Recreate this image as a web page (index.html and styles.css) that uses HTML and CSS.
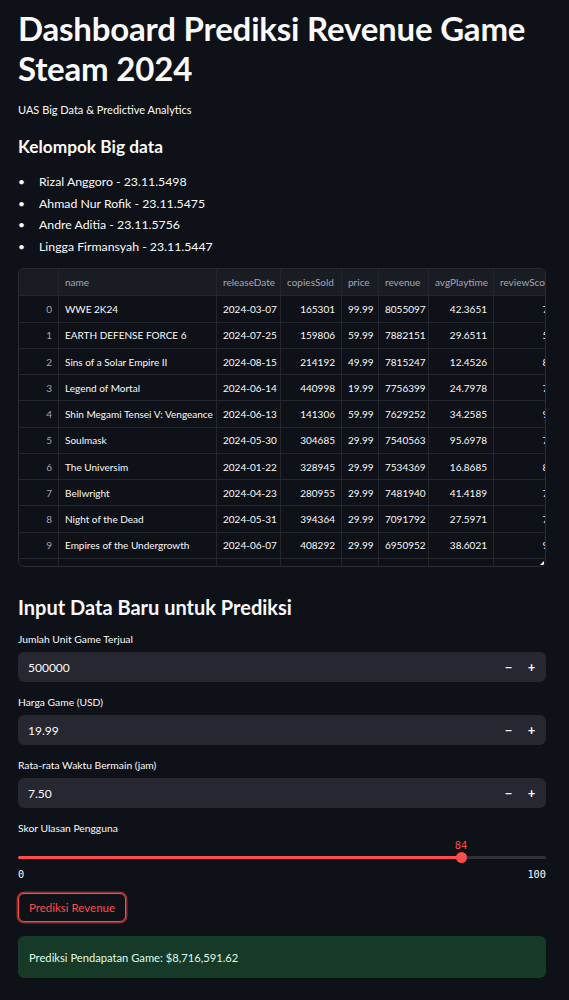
FILE: index.html
```html
<!DOCTYPE html>
<html lang="id">
<head>
<meta charset="utf-8">
<title>Dashboard Prediksi Revenue Game Steam 2024</title>
<link rel="stylesheet" href="styles.css">
</head>
<body>
<main class="main">
  <h1 class="title">Dashboard Prediksi Revenue Game Steam 2024</h1>
  <p class="subtitle">UAS Big Data &amp; Predictive Analytics</p>
  <h3 class="h3">Kelompok Big data</h3>
  <ul class="members">
    <li>Rizal Anggoro - 23.11.5498</li>
    <li>Ahmad Nur Rofik - 23.11.5475</li>
    <li>Andre Aditia - 23.11.5756</li>
    <li>Lingga Firmansyah - 23.11.5447</li>
  </ul>

  <div class="grid-wrap">
    <table class="grid">
      <colgroup>
        <col class="c-idx"><col class="c-name"><col class="c-date"><col class="c-sold"><col class="c-price"><col class="c-rev"><col class="c-play"><col class="c-score">
      </colgroup>
      <thead>
        <tr><th></th><th>name</th><th>releaseDate</th><th>copiesSold</th><th>price</th><th>revenue</th><th>avgPlaytime</th><th>reviewScore</th></tr>
      </thead>
      <tbody>
        <tr><td class="idx">0</td><td>WWE 2K24</td><td>2024-03-07</td><td class="num">165301</td><td class="num">99.99</td><td class="num">8055097</td><td class="num">42.3651</td><td class="num">73</td></tr>
        <tr><td class="idx">1</td><td>EARTH DEFENSE FORCE 6</td><td>2024-07-25</td><td class="num">159806</td><td class="num">59.99</td><td class="num">7882151</td><td class="num">29.6511</td><td class="num">58</td></tr>
        <tr><td class="idx">2</td><td>Sins of a Solar Empire II</td><td>2024-08-15</td><td class="num">214192</td><td class="num">49.99</td><td class="num">7815247</td><td class="num">12.4526</td><td class="num">86</td></tr>
        <tr><td class="idx">3</td><td>Legend of Mortal</td><td>2024-06-14</td><td class="num">440998</td><td class="num">19.99</td><td class="num">7756399</td><td class="num">24.7978</td><td class="num">77</td></tr>
        <tr><td class="idx">4</td><td>Shin Megami Tensei V: Vengeance</td><td>2024-06-13</td><td class="num">141306</td><td class="num">59.99</td><td class="num">7629252</td><td class="num">34.2585</td><td class="num">95</td></tr>
        <tr><td class="idx">5</td><td>Soulmask</td><td>2024-05-30</td><td class="num">304685</td><td class="num">29.99</td><td class="num">7540563</td><td class="num">95.6978</td><td class="num">79</td></tr>
        <tr><td class="idx">6</td><td>The Universim</td><td>2024-01-22</td><td class="num">328945</td><td class="num">29.99</td><td class="num">7534369</td><td class="num">16.8685</td><td class="num">84</td></tr>
        <tr><td class="idx">7</td><td>Bellwright</td><td>2024-04-23</td><td class="num">280955</td><td class="num">29.99</td><td class="num">7481940</td><td class="num">41.4189</td><td class="num">76</td></tr>
        <tr><td class="idx">8</td><td>Night of the Dead</td><td>2024-05-31</td><td class="num">394364</td><td class="num">29.99</td><td class="num">7091792</td><td class="num">27.5971</td><td class="num">72</td></tr>
        <tr><td class="idx">9</td><td>Empires of the Undergrowth</td><td>2024-06-07</td><td class="num">408292</td><td class="num">29.99</td><td class="num">6950952</td><td class="num">38.6021</td><td class="num">92</td></tr>
        <tr class="partial"><td class="idx"></td><td></td><td></td><td></td><td></td><td></td><td></td><td></td></tr>
      </tbody>
    </table>
    <span class="resize"></span>
  </div>

  <h2 class="h2">Input Data Baru untuk Prediksi</h2>

  <div class="field">
    <label class="label">Jumlah Unit Game Terjual</label>
    <div class="numinput">
      <span class="val">500000</span>
      <span class="step">&minus;</span><span class="step">+</span>
    </div>
  </div>
  <div class="field">
    <label class="label">Harga Game (USD)</label>
    <div class="numinput">
      <span class="val">19.99</span>
      <span class="step">&minus;</span><span class="step">+</span>
    </div>
  </div>
  <div class="field">
    <label class="label">Rata-rata Waktu Bermain (jam)</label>
    <div class="numinput">
      <span class="val">7.50</span>
      <span class="step">&minus;</span><span class="step">+</span>
    </div>
  </div>

  <div class="field slider-field">
    <label class="label">Skor Ulasan Pengguna</label>
    <div class="slider">
      <div class="track">
        <div class="fill" style="width:84%"></div>
        <div class="thumb" style="left:84%"><span class="thumb-val">84</span></div>
      </div>
    </div>
    <div class="ticks"><span>0</span><span>100</span></div>
  </div>

  <button class="btn">Prediksi Revenue</button>

  <div class="success">Prediksi Pendapatan Game: $8,716,591.62</div>
</main>
</body>
</html>
```
FILE: styles.css
```css
html, body {
  margin: 0;
  padding: 0;
  background: #0e1117;
}
body {
  color: #fafafa;
  font-family: "Lato", "Liberation Sans", sans-serif;
  width: 569px;
  height: 1000px;
  overflow: hidden;
}
.main {
  padding: 8px 23px 0 18px;
  display: flex;
  flex-direction: column;
}
.title {
  margin: 0;
  font-size: 33px;
  line-height: 40px;
  font-weight: 700;
  letter-spacing: -0.2px;
}
.subtitle {
  margin: 13px 0 0;
  font-size: 11px;
  line-height: 18px;
}
.h3 {
  margin: 16px 0 0;
  font-size: 17.3px;
  line-height: 24px;
  font-weight: 700;
}
.members {
  margin: 12px 0 0;
  padding: 0;
  list-style: none;
  font-size: 12.3px;
  line-height: 21.6px;
}
.members li {
  display: flex;
}
.members li::before {
  content: "\2022";
  flex: none;
  width: 21px;
  font-size: 12px;
}
.grid-wrap {
  margin-top: 11px;
  position: relative;
  width: 528px;
  height: 299px;
  box-sizing: border-box;
  border: 1px solid #2a2c34;
  border-radius: 6px;
  overflow: hidden;
}
.grid {
  border-collapse: collapse;
  table-layout: fixed;
  width: 542px;
  font-size: 10px;
  margin: -1px 0 0 -1px;
}
.c-idx { width: 40px; }
.c-name { width: 158px; }
.c-date { width: 64px; }
.c-sold { width: 61px; }
.c-price { width: 37px; }
.c-rev { width: 50px; }
.c-play { width: 65px; }
.c-score { width: 67px; }
.grid th, .grid td {
  border: 1px solid #24262d;
  padding: 0 6px;
  white-space: nowrap;
  overflow: hidden;
  text-align: left;
}
.grid th {
  height: 26px;
  background: #1a1c23;
  color: #a3a8b4;
  font-weight: 400;
}
.grid td {
  height: 25.25px;
  color: #fafafa;
}
.grid td.num { text-align: right; }
.grid td.idx { text-align: right; color: #a3a8b4; }
.resize {
  position: absolute;
  right: 1px;
  bottom: 1px;
  width: 0;
  height: 0;
  border-left: 4px solid transparent;
  border-bottom: 4px solid #ffffff;
}
.h2 {
  margin: 25px 0 0;
  font-size: 20px;
  line-height: 30px;
  font-weight: 700;
}
.field {
  display: flex;
  flex-direction: column;
  margin-top: 10px;
}
.field + .field { margin-top: 13px; }
.label {
  font-size: 10.3px;
  line-height: 14px;
  margin-bottom: 6px;
}
.numinput {
  height: 30px;
  background: #262730;
  border-radius: 6px;
  display: flex;
  align-items: center;
  padding-left: 10px;
  font-size: 12px;
}
.val { flex: 1; }
.step {
  width: 23px;
  text-align: center;
  font-size: 13px;
  font-weight: 700;
  color: #fafafa;
}
.step:last-child { margin-right: 3px; }
.slider-field .label { margin-bottom: 0; }
.slider {
  height: 29px;
  display: flex;
  align-items: flex-end;
}
.track {
  position: relative;
  width: 100%;
  height: 3px;
  margin-bottom: 5px;
  background: #31333b;
  border-radius: 2px;
}
.fill {
  height: 3px;
  background: #ff4b4b;
  border-radius: 2px;
}
.thumb {
  position: absolute;
  top: -4px;
  width: 11px;
  height: 11px;
  margin-left: -6px;
  background: #ff4b4b;
  border-radius: 50%;
}
.thumb-val {
  position: absolute;
  bottom: 12px;
  left: 50%;
  transform: translateX(-50%);
  color: #ff4b4b;
  font-family: "DejaVu Sans Mono", monospace;
  font-size: 10.3px;
  line-height: 12px;
}
.ticks {
  display: flex;
  justify-content: space-between;
  font-family: "DejaVu Sans Mono", monospace;
  font-size: 10.3px;
  line-height: 14px;
  margin-top: 3px;
}
.btn {
  align-self: flex-start;
  margin: 12px 0 0 0;
  height: 29px;
  padding: 0 10px;
  background: #0e1117;
  color: #ff4b4b;
  border: 1px solid #ff4b4b;
  border-radius: 6px;
  box-shadow: 0 0 0 1.5px rgba(255, 75, 75, 0.5);
  font-family: "Lato", "Liberation Sans", sans-serif;
  font-size: 11.5px;
}
.success {
  margin-top: 14px;
  height: 42px;
  box-sizing: border-box;
  padding: 0 11px;
  display: flex;
  align-items: center;
  background: #173928;
  color: #dffde9;
  border-radius: 6px;
  font-size: 11.2px;
}
```
